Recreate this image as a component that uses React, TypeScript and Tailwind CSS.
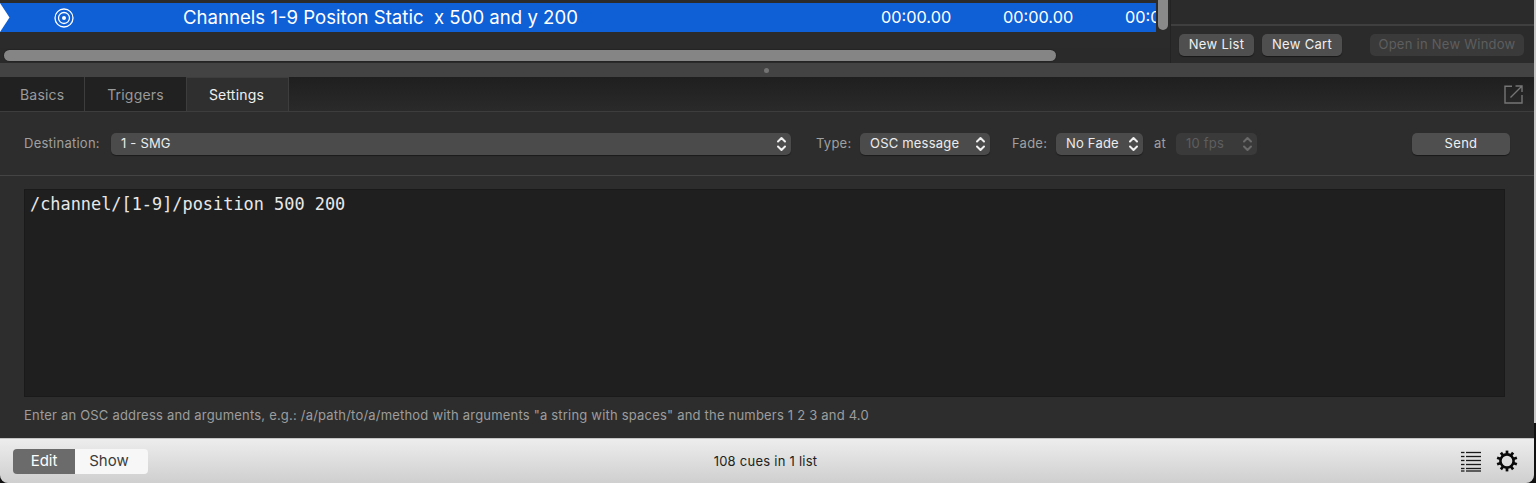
const sans = "font-['Inter','Liberation_Sans',sans-serif]";

function Chevrons({ dim }: { dim?: boolean }) {
  return (
    <svg width="11" height="18" viewBox="0 0 11 18" fill="none" stroke={dim ? "#6a6a6a" : "#f0f0f0"} strokeWidth="2" strokeLinecap="round" strokeLinejoin="round">
      <path d="M2 6.5 5.5 3 9 6.5" />
      <path d="M2 11.5 5.5 15 9 11.5" />
    </svg>
  );
}

function Select({ label, width, dim }: { label: string; width: string; dim?: boolean }) {
  return (
    <div className={`${width} h-[22px] flex items-center justify-between pl-[10px] pr-[4px] rounded-[5px] text-[13px] tracking-[0.2px] shrink-0 ${dim ? "bg-[#3a3a3a] text-[#5e5e5e]" : "bg-[#4b4b4b] text-[#ececec] shadow-[0_1px_1px_rgba(0,0,0,0.4)]"}`}>
      <span>{label}</span>
      <Chevrons dim={dim} />
    </div>
  );
}

function Btn({ label, className }: { label: string; className: string }) {
  return (
    <div className={`h-[22px] flex items-center justify-center rounded-[5px] text-[13px] tracking-[0.3px] shrink-0 bg-[#4f4f4f] text-[#f0f0f0] shadow-[0_1px_1px_rgba(0,0,0,0.45)] ${className}`}>
      {label}
    </div>
  );
}

function GearIcon() {
  const teeth = [0, 36, 72, 108, 144, 180, 216, 252, 288, 324];
  return (
    <svg width="22" height="22" viewBox="0 0 22 22" fill="none" stroke="#0a0a0a">
      <circle cx="11" cy="11" r="6.6" strokeWidth="2.6" />
      {teeth.map((a) => (
        <path key={a} d="M11 0.6V4.6" strokeWidth="2.7" transform={`rotate(${a} 11 11)`} />
      ))}
    </svg>
  );
}

function ListIcon() {
  return (
    <svg width="20" height="21" viewBox="0 0 20 21" stroke="#1a1a1a" strokeWidth="1.3">
      {[1.5, 5.5, 9.5, 13.5, 17.5, 20].map((y) => (
        <g key={y}>
          <path d={`M0 ${y}H3.5`} />
          <path d={`M5 ${y}H20`} />
        </g>
      ))}
    </svg>
  );
}

function PopOutIcon() {
  return (
    <svg width="19" height="19" viewBox="0 0 19 19" fill="none" stroke="#757575" strokeWidth="1.4">
      <path d="M8 1.2H1V18H18V10" />
      <path d="M6.5 12.5 18 1M11.5 1H18V7" />
    </svg>
  );
}

export default function App() {
  return (
    <div className={`${sans} w-[1536px] h-[483px] flex bg-[#111111] overflow-hidden`}>
      <div className="w-[1534px] h-full shrink-0 flex flex-col bg-[#2d2d2d] rounded-b-[8px] overflow-hidden">
        {/* cue list + side panel */}
        <div className="h-[63px] flex shrink-0 bg-[#2b2b2b]">
          <div className="w-[1171px] shrink-0 flex flex-col border-r border-[#232323]">
            <div className="h-[48px] flex items-start shrink-0">
              <div className="w-[1156px] h-[29px] mt-[3px] bg-[#0f5fd6] flex items-center text-white relative overflow-hidden shrink-0">
                <svg className="absolute left-0 top-0" width="10" height="29" viewBox="0 0 10 29">
                  <path d="M0 0 9.5 14.5 0 29Z" fill="#fff" />
                </svg>
                <svg className="ml-[53px] shrink-0" width="22" height="22" viewBox="0 0 22 22" fill="none" stroke="#fff">
                  <circle cx="11" cy="11" r="9" strokeWidth="1.3" />
                  <circle cx="11" cy="11" r="5.5" strokeWidth="1.3" />
                  <circle cx="11" cy="11" r="2" fill="#fff" strokeWidth="0" />
                </svg>
                <span className="ml-[108px] w-[698px] text-[18.6px] whitespace-pre shrink-0">Channels 1-9 Positon Static  x 500 and y 200</span>
                <span className="w-[122px] text-[16.3px] shrink-0">00:00.00</span>
                <span className="w-[122px] text-[16.3px] shrink-0">00:00.00</span>
                <span className="w-[31px] text-[16.3px] overflow-hidden whitespace-nowrap shrink-0">00:00.00</span>
              </div>
              <div className="ml-[2px] w-[10px] h-[30px] rounded-b-[5px] bg-[#8a8a8a]" />
            </div>
            <div className="h-[15px] bg-[#2a2a2a] px-[4px] py-[2px]">
              <div className="w-[1052px] h-[11px] rounded-full bg-[#858585] shadow-[0_0_0_1px_#242424]" />
            </div>
          </div>
          <div className="flex-1 flex flex-col">
            <div className="h-[26px] shrink-0 border-b-2 border-[#3f3f3f]" />
            <div className="flex-1 flex items-start pt-[8px] pl-[8px]">
              <Btn label="New List" className="w-[75px]" />
              <Btn label="New Cart" className="ml-[8px] w-[80px]" />
              <div className="ml-[28px] w-[154px] h-[22px] flex items-center justify-center rounded-[5px] bg-[#3a3a3a] text-[#5e5e5e] text-[13px] tracking-[0.25px]">Open in New Window</div>
            </div>
          </div>
        </div>

        {/* split handle */}
        <div className="h-[14px] shrink-0 bg-[#434343] flex items-center pl-[764px]">
          <div className="w-[5px] h-[5px] rounded-full bg-[#737373]" />
        </div>

        {/* tabs */}
        <div className="h-[35px] shrink-0 flex bg-gradient-to-b from-[#1f1f1f] to-[#2a2a2a] border-b border-[#3d3d3d]">
          <div className="w-[85px] border-r border-[#3d3d3d] pl-[20px] flex items-center text-[14px] tracking-[0.2px] text-[#9a9a9a] bg-[#212121]">Basics</div>
          <div className="w-[102px] border-r border-[#3d3d3d] flex items-center justify-center text-[14px] tracking-[0.2px] text-[#9a9a9a] bg-[#212121]">Triggers</div>
          <div className="w-[102px] border-r border-t border-[#3d3d3d] flex items-center justify-center text-[14px] tracking-[0.2px] pr-[2px] text-[#f0f0f0] bg-[#2f2f2f]">Settings</div>
          <div className="flex-1 flex justify-end items-center pr-[11px]">
            <PopOutIcon />
          </div>
        </div>

        {/* settings row */}
        <div className="h-[64px] shrink-0 flex items-center pl-[24px] text-[13px] tracking-[0.25px] text-[#a0a0a0] border-b border-[#444444]">
          <span className="w-[87px] shrink-0">Destination:</span>
          <Select label="1 - SMG" width="w-[680px]" />
          <span className="ml-[25px] w-[44px] shrink-0">Type:</span>
          <Select label="OSC message" width="w-[130px]" />
          <span className="ml-[22px] w-[44px] shrink-0">Fade:</span>
          <Select label="No Fade" width="w-[87px]" />
          <span className="ml-[11px] w-[22px] shrink-0">at</span>
          <Select label="10 fps" width="w-[81px]" dim />
          <Btn label="Send" className="ml-[155px] w-[98px]" />
        </div>

        {/* osc message editor */}
        <div className="flex-1 flex flex-col px-[24px] pt-[13px]">
          <div className="w-[1481px] h-[208px] bg-[#1f1f1f] border border-[#1a1a1a] pl-[5px] pt-[3px] font-['DejaVu_Sans_Mono',monospace] text-[16.9px] leading-[22px] text-[#e8e8e8]">
            /channel/[1-9]/position 500 200
          </div>
          <div className="mt-[9px] text-[13px] tracking-[0.2px] leading-[18px] text-[#9d9d9d] whitespace-nowrap">
            Enter an OSC address and arguments, e.g.: /a/path/to/a/method with arguments "a string with spaces" and the numbers 1 2 3 and 4.0
          </div>
        </div>

        {/* status bar */}
        <div className="h-[45px] shrink-0 flex items-center pl-[13px] pr-[16px] bg-gradient-to-b from-[#ededed] to-[#cfcfcf] border-t border-[#c4c4c4]">
          <div className="flex h-[25px] w-[135px] rounded-[4px] overflow-hidden text-[15px] shrink-0">
            <div className="w-[62px] bg-[#6b6b6b] text-white flex items-center justify-center">Edit</div>
            <div className="flex-1 bg-[#f7f7f7] text-[#3c3c3c] flex items-center justify-center pr-[5px]">Show</div>
          </div>
          <div className="flex-1 text-center text-[13px] tracking-[0.25px] text-[#222222] pt-[1px] pr-[78px]">108 cues in 1 list</div>
          <div className="flex items-center gap-[15px]">
            <ListIcon />
            <GearIcon />
          </div>
        </div>
      </div>

      {/* edge of the window behind */}
      <div className="flex-1 flex flex-col">
        <div className="h-[423px] shrink-0 bg-[#c8c8c8]" />
      </div>
    </div>
  );
}
